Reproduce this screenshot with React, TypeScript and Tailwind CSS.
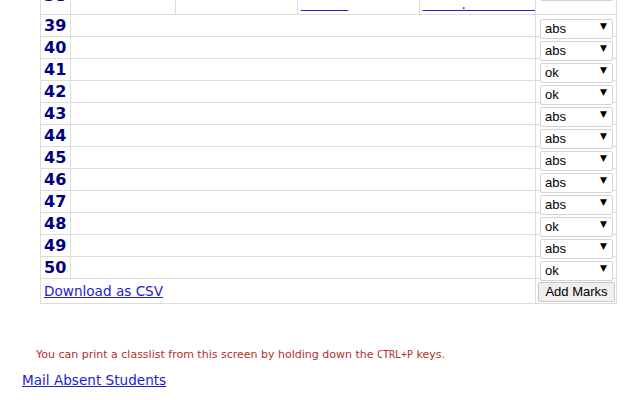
import { useState } from 'react'

const rows: { n: number; mark: string }[] = [
    { n: 39, mark: 'abs' },
    { n: 40, mark: 'abs' },
    { n: 41, mark: 'ok' },
    { n: 42, mark: 'ok' },
    { n: 43, mark: 'abs' },
    { n: 44, mark: 'abs' },
    { n: 45, mark: 'abs' },
    { n: 46, mark: 'abs' },
    { n: 47, mark: 'abs' },
    { n: 48, mark: 'ok' },
    { n: 49, mark: 'abs' },
    { n: 50, mark: 'ok' },
]

function MarkSelect({ value }: { value: string }) {
    const [mark, setMark] = useState(value)
    return (
        <div className="relative w-[73px] h-[20px]">
            <select
                value={mark}
                onChange={(e) => setMark(e.target.value)}
                className="appearance-none w-full h-full bg-white border border-[#d4d4d4] rounded-[2px] pl-[4px] text-[13px] leading-[18px] text-black font-['Liberation_Sans',Arial,sans-serif] outline-none"
            >
                <option value="ok">ok</option>
                <option value="abs">abs</option>
            </select>
            <span className="pointer-events-none absolute right-[6px] top-[3px] text-[9px] leading-[14px] text-black font-['DejaVu_Sans',sans-serif]">
                ▼
            </span>
        </div>
    )
}

export default function App() {
    const cell = 'border-r border-b border-[#dcdcdc] p-0'

    return (
        <div className="bg-white min-h-[400px] font-['DejaVu_Sans',Verdana,sans-serif] overflow-hidden">
            <table className="ml-[40px] mt-[-22px] w-[577px] border-separate border-spacing-0 border-l border-[#dcdcdc]">
                <tbody>
                    <tr className="h-[37px]">
                        <td className={`${cell} w-[30px] pl-[3px] align-middle text-[16px] font-bold text-[#000080]`}>38</td>
                        <td className={`${cell} w-[105px]`}></td>
                        <td className={`${cell} w-[122px]`}></td>
                        <td className={`${cell} w-[122px] align-bottom pb-[2px] pl-[3px] text-[13.6px] leading-[16px]`}>
                            <a href="#" className="text-[#2222cc] underline">&nbsp;&nbsp;&nbsp;&nbsp;&nbsp;&nbsp;&nbsp;&nbsp;&nbsp;&nbsp;&nbsp;</a>
                        </td>
                        <td className={`${cell} w-[116px] align-bottom pb-[2px] pl-[3px] text-[13.6px] leading-[16px]`}>
                            <a href="#" className="text-[#2222cc] underline">&nbsp;&nbsp;&nbsp;&nbsp;&nbsp;&nbsp;&nbsp;&nbsp;&nbsp;.&nbsp;&nbsp;&nbsp;&nbsp;&nbsp;&nbsp;&nbsp;&nbsp;&nbsp;&nbsp;&nbsp;&nbsp;&nbsp;&nbsp;&nbsp;&nbsp;</a>
                        </td>
                        <td className={`${cell} w-[81px] align-top pl-[4px]`}>
                            <MarkSelect value="abs" />
                        </td>
                    </tr>
                    {rows.map((r) => (
                        <tr key={r.n} className="h-[22px]">
                            <td className={`${cell} pl-[3px] align-middle text-[16px] leading-[19px] font-bold text-[#000080]`}>{r.n}</td>
                            <td colSpan={4} className={cell}></td>
                            <td className={`${cell} pl-[4px] align-middle`}>
                                <MarkSelect value={r.mark} />
                            </td>
                        </tr>
                    ))}
                    <tr className="h-[22px]">
                        <td colSpan={5} className={`${cell} pl-[3px] align-middle text-[13.6px] leading-[17px]`}>
                            <a href="#" className="text-[#2222cc] underline">Download as CSV</a>
                        </td>
                        <td className={`${cell} pl-[2px] align-middle`}>
                            <button className="w-[77px] h-[20px] bg-[#efefef] border border-[#c8c8c8] rounded-[2px] text-[13px] leading-[18px] text-black font-['Liberation_Sans',Arial,sans-serif]">
                                Add Marks
                            </button>
                        </td>
                    </tr>
                </tbody>
            </table>

            <p className="ml-[36px] mt-[44px] text-[11px] leading-[14px] text-[#b3302a]">
                You can print a classlist from this screen by holding down the{' '}
                <span className="font-['DejaVu_Sans_Mono',monospace] text-[10px]">CTRL+P</span> keys.
            </p>

            <p className="ml-[22px] mt-[10px] text-[13.6px] leading-[17px]">
                <a href="#" className="text-[#2222cc] underline">Mail Absent Students</a>
            </p>
        </div>
    )
}
